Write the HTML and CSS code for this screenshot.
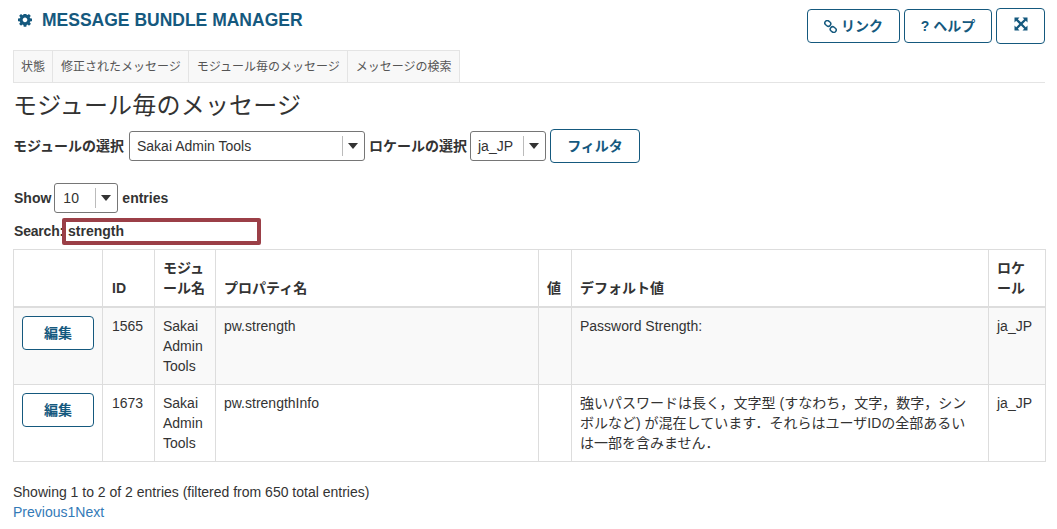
FILE: index.html
```html
<!DOCTYPE html>
<html lang="ja">
<head>
  <meta charset="UTF-8" />
  <title>Message Bundle Manager</title>
  <link rel="stylesheet" href="styles.css">
</head>
<body>
  <div class="portlet-head">
    <h1 class="tool-title">
      <svg class="gear" viewBox="0 0 1536 1536"><path d="M1024 640q0-106-75-181t-181-75-181 75-75 181 75 181 181 75 181-75 75-181zm512-109v222q0 12-8 23t-20 13l-185 28q-19 54-39 91 35 50 107 138 10 12 10 25t-9 23q-27 37-99 108t-94 71q-12 0-26-9l-138-108q-44 23-91 38-16 136-29 186-7 28-36 28h-222q-14 0-24.5-8.5t-11.5-21.5l-28-184q-49-16-90-37l-141 107q-10 9-25 9-14 0-25-11-126-114-165-168-7-10-7-23 0-12 8-23 15-21 51-66.5t54-70.5q-27-50-41-99l-183-27q-13-2-21-12.5t-8-23.5v-222q0-12 8-23t19-13l186-28q14-46 39-92-40-57-107-138-10-12-10-24 0-10 9-23 26-36 98.5-107.5t94.5-71.5q13 0 26 10l138 107q44-23 91-38 16-136 29-186 7-28 36-28h222q14 0 24.5 8.5t11.5 21.5l28 184q49 16 90 37l142-107q9-9 24-9 13 0 25 10 129 119 165 170 7 8 7 22 0 12-8 23-15 21-51 66.5t-54 70.5q26 50 41 98l183 28q13 2 21 12.5t8 23.5z"/></svg>
      MESSAGE BUNDLE MANAGER
    </h1>
    <div class="head-buttons">
      <a class="btn btn-head link-btn">
        <svg class="link-icon" viewBox="0 0 14 14"><g fill="none" stroke="#15597e" stroke-width="1.6"><rect x="0.8" y="1" width="6.6" height="5.2" rx="2.5" transform="rotate(40 4 3.6)"/><rect x="6.6" y="7.8" width="6.6" height="5.2" rx="2.5" transform="rotate(40 10 10.4)"/></g></svg>
        リンク
      </a>
      <a class="btn btn-head help-btn"><b>?</b> ヘルプ</a>
      <a class="btn btn-full">
        <svg class="full-icon" viewBox="0 0 14 14"><path fill="#15597e" d="M0.5 0.5h5l-1.7 1.7 3.2 3.1 3.2-3.1-1.7-1.7h5v5l-1.7-1.7-3.2 3.2 3.2 3.2 1.7-1.7v5h-5l1.7-1.7-3.2-3.2-3.2 3.2 1.7 1.7h-5v-5l1.7 1.7 3.1-3.2-3.1-3.2-1.7 1.7z"/></svg>
      </a>
    </div>
  </div>

  <ul class="tabs">
    <li>状態</li>
    <li>修正されたメッセージ</li>
    <li>モジュール毎のメッセージ</li>
    <li>メッセージの検索</li>
  </ul>

  <h2 class="page-title">モジュール毎のメッセージ</h2>

  <div class="filter-row">
    <label class="module-label">モジュールの選択</label>
    <div class="select select-module"><span class="select-value">Sakai Admin Tools</span><span class="select-arrow"></span></div>
    <label class="locale-label">ロケールの選択</label>
    <div class="select select-locale"><span class="select-value">ja_JP</span><span class="select-arrow"></span></div>
    <a class="btn btn-filter">フィルタ</a>
  </div>

  <div class="length-row">
    <label>Show</label>
    <div class="select select-length"><span class="select-value">10</span><span class="select-arrow"></span></div>
    <label>entries</label>
  </div>

  <div class="search-row">
    <label class="search-label">Search:</label>
    <input class="search-input" type="text" value="strength">
  </div>

  <table class="list">
    <colgroup>
      <col class="c-edit"><col class="c-id"><col class="c-mod"><col class="c-prop"><col class="c-val"><col class="c-def"><col class="c-loc">
    </colgroup>
    <thead>
      <tr>
        <th></th>
        <th class="id-cell">ID</th>
        <th>モジュール名</th>
        <th>プロパティ名</th>
        <th>値</th>
        <th>デフォルト値</th>
        <th>ロケール</th>
      </tr>
    </thead>
    <tbody>
      <tr class="odd">
        <td><a class="btn btn-edit">編集</a></td>
        <td class="id-cell">1565</td>
        <td>Sakai Admin Tools</td>
        <td>pw.strength</td>
        <td></td>
        <td class="def-cell">Password Strength:</td>
        <td>ja_JP</td>
      </tr>
      <tr>
        <td><a class="btn btn-edit">編集</a></td>
        <td class="id-cell">1673</td>
        <td>Sakai Admin Tools</td>
        <td>pw.strengthInfo</td>
        <td></td>
        <td class="def-cell">強いパスワードは長く，文字型 (すなわち，文字，数字，シンボルなど) が混在しています．それらはユーザIDの全部あるいは一部を含みません．</td>
        <td>ja_JP</td>
      </tr>
    </tbody>
  </table>

  <div class="table-info">Showing 1 to 2 of 2 entries (filtered from 650 total entries)</div>
  <div class="paging"><a>Previous</a><a>1</a><a>Next</a></div>
</body>
</html>
```

FILE: styles.css
```css
html {
  box-sizing: border-box;
}

*, *:before, *:after {
  box-sizing: inherit;
}

body {
  margin: 0;
  padding: 0 12px 0 13px;
  font-family: "Liberation Sans", "Noto Sans CJK JP", sans-serif;
  font-size: 14px;
  line-height: 20px;
  color: #333;
  background: #fff;
  overflow: hidden;
}

.portlet-head {
  display: flex;
  justify-content: space-between;
  align-items: flex-start;
  height: 50px;
}

.tool-title {
  display: flex;
  align-items: center;
  margin: 9px 0 0 5px;
  font-size: 17.5px;
  line-height: 22px;
  font-weight: bold;
  color: #15597e;
}

.gear {
  width: 14px;
  height: 14px;
  margin: 2px 10px 0 0;
  fill: #15597e;
}

.btn {
  display: inline-flex;
  align-items: center;
  justify-content: center;
  border: 1px solid #15597e;
  border-radius: 4px;
  color: #15597e;
  background: #fff;
  cursor: pointer;
}

.head-buttons {
  display: flex;
  align-items: flex-start;
  gap: 4px;
  margin-top: 8px;
}

.btn-head {
  height: 34px;
  margin-top: 1px;
  font-weight: bold;
  gap: 4px;
}

.link-btn {
  width: 93px;
}

.help-btn {
  width: 88px;
}

.link-icon {
  width: 13px;
  height: 13px;
}

.btn-full {
  width: 49px;
  height: 36px;
  padding-bottom: 4px;
}

.full-icon {
  width: 14px;
  height: 14px;
}

.tabs {
  display: flex;
  margin: 0;
  padding: 0;
  list-style: none;
  height: 33px;
  border-bottom: 1px solid #e4e4e4;
}

.tabs li {
  height: 32px;
  padding: 0 7px 0 8px;
  font-size: 12px;
  line-height: 32px;
  color: #555;
  background: #f8f8f8;
  border: 1px solid #e4e4e4;
  border-bottom: 0;
  margin-right: -1px;
}

.tabs li:first-child {
  padding: 0 7px;
}

.tabs li:last-child {
  padding: 0 8px;
}

.page-title {
  margin: 8px 0 0;
  font-size: 24px;
  line-height: 30px;
  letter-spacing: 0.2px;
  font-weight: normal;
  color: #333;
}

label {
  font-weight: bold;
}

.filter-row {
  display: flex;
  align-items: center;
  gap: 4px;
  margin-top: 8px;
  height: 34px;
}

.module-label {
  min-width: 112px;
}

.locale-label {
  margin-right: -1px;
}

.select {
  display: flex;
  align-items: center;
  justify-content: space-between;
  height: 30px;
  padding-left: 8px;
  border: 1px solid #767676;
  border-radius: 3px;
  color: #333;
  background: #fff;
}

.select-arrow {
  position: relative;
  flex: none;
  width: 22px;
  height: 20px;
  border-left: 1px solid #bbb;
}

.select-arrow:after {
  content: "";
  position: absolute;
  left: 5px;
  top: 7px;
  border-style: solid;
  border-width: 6px 5.5px 0;
  border-color: #333 transparent transparent;
}

.select-module {
  width: 236px;
  padding-left: 7px;
}

.select-locale {
  width: 76px;
  padding-left: 7px;
}

.btn-filter {
  width: 90px;
  height: 34px;
  font-weight: bold;
}

.length-row {
  display: flex;
  align-items: center;
  gap: 4px;
  margin-top: 20px;
  height: 30px;
}

.length-row label {
  margin-left: 1px;
}

.select-length {
  width: 64px;
  margin: 0 -1px;
}

.search-row {
  display: flex;
  align-items: center;
  margin-top: 4px;
  height: 28px;
  padding-left: 1px;
}

.search-label {
  flex: none;
  width: 48px;
  letter-spacing: -0.2px;
  white-space: nowrap;
}

.search-input {
  width: 199px;
  height: 27px;
  padding: 0 2px;
  border: 4px solid #9b3f47;
  border-radius: 2px;
  outline: 0;
  font: bold 14px "Liberation Sans", sans-serif;
  color: #333;
  background: #fff;
}

.list {
  width: 1032px;
  margin-top: 4px;
  table-layout: fixed;
  border-collapse: collapse;
  border: 1px solid #ddd;
}

.c-edit { width: 89px; }
.c-id { width: 52px; }
.c-mod { width: 61px; }
.c-prop { width: 323px; }
.c-val { width: 33px; }
.c-def { width: 417px; }
.c-loc { width: 57px; }

.list th, .list td {
  padding: 8px;
  text-align: left;
  vertical-align: top;
  border: 1px solid #ddd;
}

.list th {
  vertical-align: bottom;
  font-weight: bold;
  border-bottom-width: 2px;
}

.list th.id-cell, .list td.id-cell {
  padding-left: 9px;
}

.list td.def-cell {
  padding-right: 18px;
}

.list tr.odd td {
  background: #f9f9f9;
}

.btn-edit {
  width: 72px;
  height: 34px;
  font-weight: bold;
}

.table-info {
  margin-top: 20px;
}

.paging a {
  color: #337ab7;
}
```
